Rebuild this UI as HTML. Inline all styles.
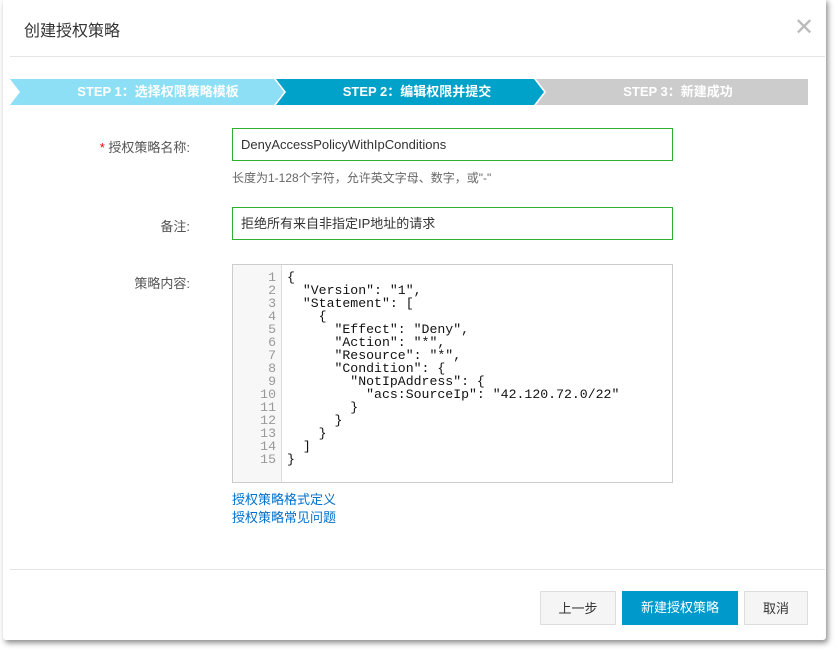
<!DOCTYPE html>
<html><head><meta charset="utf-8"><style>
body{margin:0;width:838px;height:653px;background:#fff;font-family:"Liberation Sans","Noto Sans CJK SC",sans-serif;position:relative;overflow:hidden}
.dlg{position:absolute;left:3px;top:-2px;width:823px;height:642px;background:#fff;box-shadow:2px 3px 6px rgba(0,0,0,.45);border-radius:3px}
.a{position:absolute}
.t{left:24px;top:17px;font-size:16px;color:#333}
.x{left:794px;top:13px;font-size:24px;color:#bbb;font-weight:300}
.hl{left:10px;width:815px;height:1px;background:#e5e5e5}
.step{position:absolute;top:79px;height:26px;line-height:26px;color:#fff;font-size:13px;font-weight:bold;text-align:center}
.lab{font-size:13px;color:#555;text-align:right;width:110px;left:80px}
.inp{left:232px;width:441px;height:33px;border:1px solid #2eb12e;box-sizing:border-box;font-size:13px;color:#333;line-height:31px;padding-left:8px}
.code{left:232px;top:264px;width:441px;height:219px;border:1px solid #ccc;box-sizing:border-box;font-family:"Liberation Mono",monospace;font-size:13.2px;line-height:13px}
.g{position:absolute;left:0;top:0;width:49px;height:100%;background:#f7f7f7;border-right:1px solid #ddd;color:#999;text-align:right;padding-top:6px;box-sizing:border-box;padding-right:5px;white-space:pre}
.c{position:absolute;left:54px;top:6px;white-space:pre;color:#111}
.lk{left:232px;font-size:13px;color:#0070cc}
.btn{top:591px;height:34px;line-height:34px;text-align:center;font-size:13px;box-sizing:border-box}
</style></head><body>
<div class="dlg"></div>
<div class="a t">创建授权策略</div>
<div class="a x">✕</div>
<div class="a hl" style="top:56px"></div>
<svg class="a" style="left:10px;top:79px" width="800" height="26">
<polygon points="0,0 264,0 274,13 264,26 0,26 10,13" fill="#8ddff5"/>
<polygon points="266,0 524,0 534,13 524,26 266,26 276,13" fill="#00a2ca"/>
<polygon points="526,0 798,0 798,26 526,26 536,13" fill="#cccccc"/>
</svg>
<div class="step" style="left:33px;width:250px">STEP 1：选择权限策略模板</div>
<div class="step" style="left:292px;width:250px">STEP 2：编辑权限并提交</div>
<div class="step" style="left:553px;width:250px">STEP 3：新建成功</div>
<div class="a lab" style="top:137px"><span style="color:#e00">* </span>授权策略名称:</div>
<div class="a inp" style="top:128px">DenyAccessPolicyWithIpConditions</div>
<div class="a" style="left:232px;top:169px;font-size:12px;color:#666">长度为1-128个字符，允许英文字母、数字，或"-"</div>
<div class="a lab" style="top:216px">备注:</div>
<div class="a inp" style="top:207px">拒绝所有来自非指定IP地址的请求</div>
<div class="a lab" style="top:273px">策略内容:</div>
<div class="a code"><div class="g">1
2
3
4
5
6
7
8
9
10
11
12
13
14
15</div><div class="c">{
  "Version": "1",
  "Statement": [
    {
      "Effect": "Deny",
      "Action": "*",
      "Resource": "*",
      "Condition": {
        "NotIpAddress": {
          "acs:SourceIp": "42.120.72.0/22"
        }
      }
    }
  ]
}</div></div>
<div class="a lk" style="top:489px">授权策略格式定义</div>
<div class="a lk" style="top:507px">授权策略常见问题</div>
<div class="a hl" style="top:569px"></div>
<div class="a btn" style="left:540px;width:76px;background:#f5f5f5;border:1px solid #ddd;color:#333">上一步</div>
<div class="a btn" style="left:622px;width:116px;background:#0099cc;color:#fff">新建授权策略</div>
<div class="a btn" style="left:744px;width:64px;background:#f5f5f5;border:1px solid #ddd;color:#333">取消</div>
</body></html>
